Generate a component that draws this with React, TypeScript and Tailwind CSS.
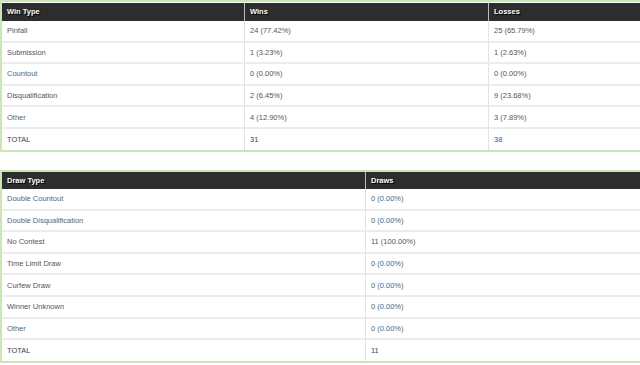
const winRows = [
  { label: "Pinfall", wins: "24 (77.42%)", losses: "25 (65.79%)", blue: false },
  { label: "Submission", wins: "1 (3.23%)", losses: "1 (2.63%)", blue: false },
  { label: "Countout", wins: "0 (0.00%)", losses: "0 (0.00%)", blue: true },
  { label: "Disqualification", wins: "2 (6.45%)", losses: "9 (23.68%)", blue: false },
  { label: "Other", wins: "4 (12.90%)", losses: "3 (7.89%)", blue: true },
];

const drawRows = [
  { label: "Double Countout", draws: "0 (0.00%)", blue: true },
  { label: "Double Disqualification", draws: "0 (0.00%)", blue: true },
  { label: "No Contest", draws: "11 (100.00%)", blue: false },
  { label: "Time Limit Draw", draws: "0 (0.00%)", blue: false },
  { label: "Curfew Draw", draws: "0 (0.00%)", blue: false },
  { label: "Winner Unknown", draws: "0 (0.00%)", blue: false },
  { label: "Other", draws: "0 (0.00%)", blue: true },
];

const head =
  "flex items-center px-[5px] font-bold text-white [text-shadow:1px_1px_0_#000]";
const cell = "flex items-center px-[5px] h-[21.6px] border-b-2 border-[#ececec]";

export default function App() {
  return (
    <div className="w-[640px] h-[365px] overflow-hidden bg-white text-[7.5px] text-[#555] font-['Liberation_Sans',Arial,sans-serif]">
      <div className="border-l-2 border-t-2 border-b-2 border-[#cbe6b4]">
        <div className="grid grid-cols-[242px_244px_1fr] bg-[#2d2d2d] h-[18px] mt-px">
          <div className={head}>Win Type</div>
          <div className={head + " border-l border-[#bbb]"}>Wins</div>
          <div className={head + " border-l border-[#bbb]"}>Losses</div>
        </div>
        {winRows.map((r) => (
          <div key={r.label} className="grid grid-cols-[242px_244px_1fr]">
            <div className={cell + (r.blue ? " text-[#46698c]" : "")}>{r.label}</div>
            <div className={cell + " border-l border-l-[#e2e2e2]"}>{r.wins}</div>
            <div className={cell + " border-l border-l-[#e2e2e2]"}>{r.losses}</div>
          </div>
        ))}
        <div className="grid grid-cols-[242px_244px_1fr]">
          <div className="flex items-center px-[5px] h-[21px] text-[#444]">TOTAL</div>
          <div className="flex items-center px-[5px] h-[21px] border-l border-[#e2e2e2] text-[#444]">31</div>
          <div className="flex items-center px-[5px] h-[21px] border-l border-[#e2e2e2] text-[#3a5a7a]">38</div>
        </div>
      </div>

      <div className="mt-[18px] border-l-2 border-t-2 border-b-2 border-[#cbe6b4]">
        <div className="grid grid-cols-[363px_1fr] bg-[#2d2d2d] h-[17px]">
          <div className={head}>Draw Type</div>
          <div className={head + " border-l border-[#bbb]"}>Draws</div>
        </div>
        {drawRows.map((r) => (
          <div key={r.label} className="grid grid-cols-[363px_1fr]">
            <div className={cell + (r.blue ? " text-[#46698c]" : "")}>{r.label}</div>
            <div className={cell + " border-l border-l-[#e2e2e2]" + (r.draws.startsWith("0") ? " text-[#46698c]" : "")}>
              {r.draws}
            </div>
          </div>
        ))}
        <div className="grid grid-cols-[363px_1fr]">
          <div className="flex items-center px-[5px] h-[21px] text-[#444]">TOTAL</div>
          <div className="flex items-center px-[5px] h-[21px] border-l border-[#e2e2e2] text-[#444]">11</div>
        </div>
      </div>
    </div>
  );
}
